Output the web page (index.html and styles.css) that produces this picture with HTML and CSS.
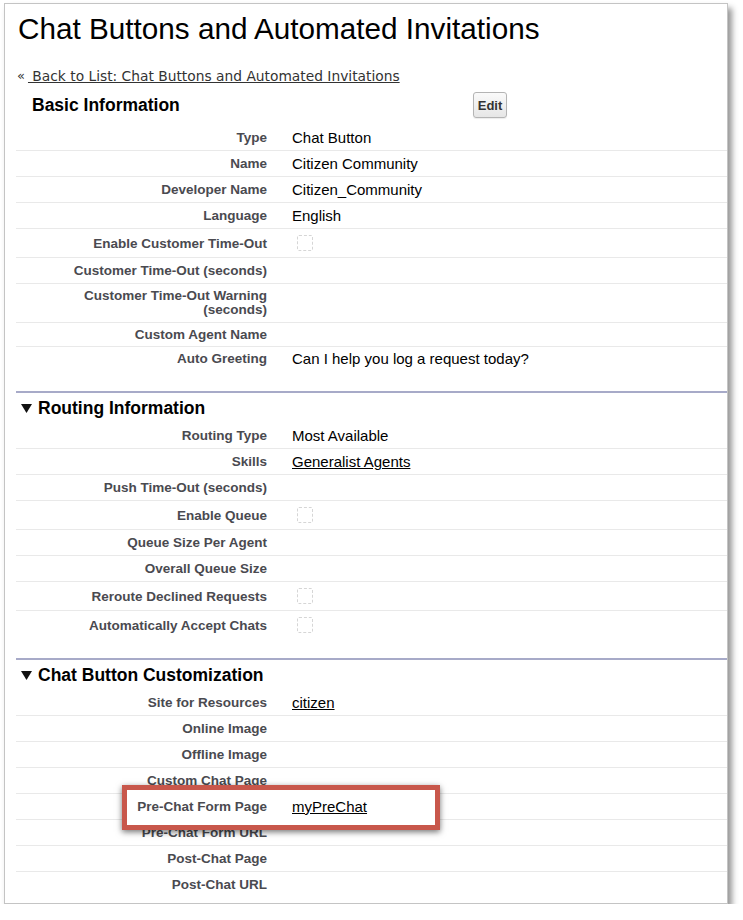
FILE: index.html
```html
<!DOCTYPE html>
<html lang="en">
<head>
<meta charset="utf-8">
<title>Chat Buttons and Automated Invitations</title>
<link rel="stylesheet" href="styles.css">
</head>
<body>
<div class="frame">
  <h1 class="page-title">Chat Buttons and Automated Invitations</h1>
  <div class="back"><span class="raquo">«</span><a href="#" class="back-link">&nbsp;Back to List: Chat Buttons and Automated Invitations</a></div>

  <section class="block first">
    <div class="block-head basic">
      <h2 class="block-title">Basic Information</h2>
      <button class="btn">Edit</button>
    </div>
    <div class="rows">
      <div class="row"><div class="lbl">Type</div><div class="val">Chat Button</div></div>
      <div class="row"><div class="lbl">Name</div><div class="val">Citizen Community</div></div>
      <div class="row"><div class="lbl">Developer Name</div><div class="val">Citizen_Community</div></div>
      <div class="row"><div class="lbl">Language</div><div class="val">English</div></div>
      <div class="row"><div class="lbl">Enable Customer Time-Out</div><div class="val"><span class="chk"></span></div></div>
      <div class="row"><div class="lbl">Customer Time-Out (seconds)</div><div class="val"></div></div>
      <div class="row"><div class="lbl narrow">Customer Time-Out Warning (seconds)</div><div class="val"></div></div>
      <div class="row compact"><div class="lbl">Custom Agent Name</div><div class="val"></div></div>
      <div class="row compact"><div class="lbl">Auto Greeting</div><div class="val">Can I help you log a request today?</div></div>
    </div>
  </section>

  <section class="block routing">
    <div class="block-head">
      <svg class="tri" width="11" height="9" viewBox="0 0 11 9"><polygon points="0,0 11,0 5.5,9" fill="#111"/></svg>
      <h2 class="block-title">Routing Information</h2>
    </div>
    <div class="rows">
      <div class="row"><div class="lbl">Routing Type</div><div class="val">Most Available</div></div>
      <div class="row"><div class="lbl">Skills</div><div class="val"><a href="#" class="lnk">Generalist Agents</a></div></div>
      <div class="row"><div class="lbl">Push Time-Out (seconds)</div><div class="val"></div></div>
      <div class="row"><div class="lbl">Enable Queue</div><div class="val"><span class="chk"></span></div></div>
      <div class="row"><div class="lbl">Queue Size Per Agent</div><div class="val"></div></div>
      <div class="row"><div class="lbl">Overall Queue Size</div><div class="val"></div></div>
      <div class="row"><div class="lbl">Reroute Declined Requests</div><div class="val"><span class="chk"></span></div></div>
      <div class="row"><div class="lbl">Automatically Accept Chats</div><div class="val"><span class="chk"></span></div></div>
    </div>
  </section>

  <section class="block">
    <div class="block-head">
      <svg class="tri" width="11" height="9" viewBox="0 0 11 9"><polygon points="0,0 11,0 5.5,9" fill="#111"/></svg>
      <h2 class="block-title">Chat Button Customization</h2>
    </div>
    <div class="rows">
      <div class="row"><div class="lbl">Site for Resources</div><div class="val"><a href="#" class="lnk">citizen</a></div></div>
      <div class="row"><div class="lbl">Online Image</div><div class="val"></div></div>
      <div class="row"><div class="lbl">Offline Image</div><div class="val"></div></div>
      <div class="row"><div class="lbl">Custom Chat Page</div><div class="val"></div></div>
      <div class="row highlight"><div class="lbl">Pre-Chat Form Page</div><div class="val"><a href="#" class="lnk">myPreChat</a></div></div>
      <div class="row"><div class="lbl">Pre-Chat Form URL</div><div class="val"></div></div>
      <div class="row"><div class="lbl">Post-Chat Page</div><div class="val"></div></div>
      <div class="row"><div class="lbl">Post-Chat URL</div><div class="val"></div></div>
    </div>
  </section>
</div>
</body>
</html>
```

FILE: styles.css
```css
*, *::before, *::after { box-sizing: border-box; }

html, body {
  margin: 0;
  padding: 0;
  background: #ffffff;
}

body {
  font-family: "Liberation Sans", Arial, sans-serif;
  color: #000;
}

.frame {
  margin: 3px 0 0 4px;
  width: 724px;
  height: 901px;
  border: 1px solid #c4c4c4;
  background: #fff;
  box-shadow: 4px 5px 6px rgba(0, 0, 0, 0.42);
  padding: 0 0 0 11px;
  overflow: visible;
}

.page-title {
  margin: 7px 0 0 2px;
  font-size: 29.7px;
  line-height: 36px;
  font-weight: normal;
  color: #000;
}

.back {
  margin-top: 21px;
  height: 16px;
  font-family: "DejaVu Sans", Verdana, sans-serif;
  font-size: 13.8px;
  line-height: 16px;
  color: #333;
  display: flex;
}

.raquo {
  color: #333;
  margin-left: 1px;
  margin-right: 3px;
  font-size: 13px;
}

.back-link {
  color: #333;
  text-decoration: underline;
}

.block-head {
  display: flex;
  align-items: center;
  height: 30px;
  padding-left: 4px;
}

.block-head.basic {
  height: 26px;
  margin: 8px 0 7px;
  padding-left: 16px;
}

.block-title {
  margin: 0;
  font-size: 17.5px;
  font-weight: bold;
  color: #000;
}

.basic .block-title {
  width: 441px;
}

.tri {
  margin: 0 6px 0 1px;
}

.btn {
  height: 26px;
  width: 34px;
  padding: 0;
  font-family: "Liberation Sans", Arial, sans-serif;
  font-size: 13px;
  font-weight: bold;
  color: #333;
  border: 1px solid #b4b4b4;
  border-radius: 3px;
  background: linear-gradient(#fafafa, #e6e6e6);
  box-shadow: 0 1px 1px rgba(0, 0, 0, 0.08);
}

.block {
  padding-bottom: 21px;
}

.block + .block {
  border-top: 2px solid #a7aac8;
}

.block.routing {
  padding-bottom: 19px;
}

.rows {
  display: flex;
  flex-direction: column;
}

.row {
  display: grid;
  grid-template-columns: 263px 1fr;
  align-items: center;
  border-bottom: 1px solid #e9e9e9;
}

.row:last-child {
  border-bottom: none;
}

.lbl {
  padding: 6px 12px 5px 0;
  text-align: right;
  font-size: 13.5px;
  line-height: 14px;
  font-weight: bold;
  color: #4a4a50;
}

.lbl.narrow {
  padding: 5px 12px 5px 60px;
}

.row.compact .lbl {
  padding-top: 5px;
  padding-bottom: 4px;
}

.row.compact .val {
  padding-top: 3px;
  padding-bottom: 3px;
}

.val {
  padding: 4px 0 4px 13px;
  font-size: 15px;
  line-height: 17px;
  color: #000;
  display: flex;
  align-items: center;
}

.chk {
  display: block;
  width: 16px;
  height: 16px;
  margin: 2px 0 2px 5px;
  border: 1px dashed #d6d6d6;
  border-radius: 2px;
  background: #fff;
}

.lnk {
  color: #000;
  text-decoration: underline;
}

.highlight {
  position: relative;
}

.highlight::before {
  content: "";
  position: absolute;
  left: 106px;
  top: -9px;
  width: 318px;
  height: 45px;
  border: 5px solid #c8574b;
  background: #fff;
  box-shadow: 0 2px 6px rgba(0, 0, 0, 0.55);
  z-index: 1;
}

.highlight > .lbl,
.highlight > .val {
  position: relative;
  z-index: 2;
}
```
